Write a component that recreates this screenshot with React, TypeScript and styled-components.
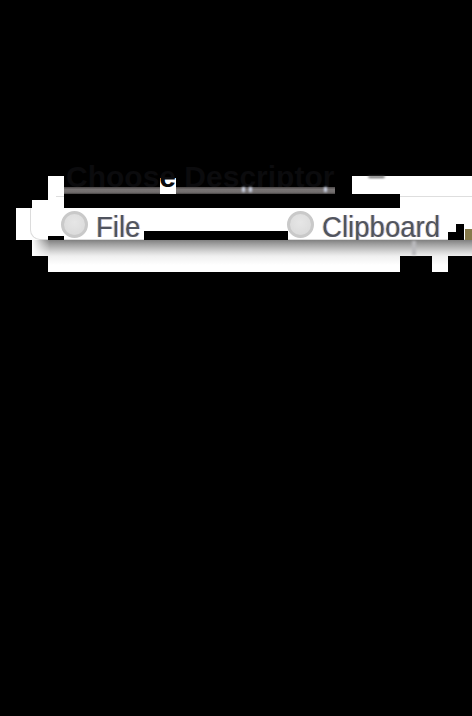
import React from "react";
import styled, { createGlobalStyle } from "styled-components";

const Global = createGlobalStyle`
  html, body { margin: 0; padding: 0; background: #000; }
  #root { width: 472px; height: 716px; overflow: hidden; }
`;

const Stage = styled.div`
  position: relative;
  width: 472px;
  height: 716px;
  background: #000;
  padding: 176px 0 0 16px;
  box-sizing: border-box;
  overflow: hidden;
`;

const Strip = styled.div<{ $h: number }>`
  display: flex;
  height: ${(p) => p.$h}px;
`;

const Void = styled.div<{ $w: number }>`
  position: relative;
  flex: none;
  width: ${(p) => p.$w}px;
  display: flex;
  align-items: flex-end;
`;

const Clear = styled.div<{ $w?: number }>`
  background: #fff;
  flex: ${(p) => (p.$w ? `none` : `1`)};
  width: ${(p) => (p.$w ? `${p.$w}px` : `auto`)};
  display: flex;
  justify-content: flex-start;
`;

const Rule = styled.div<{ $inset?: number }>`
  width: 100%;
  height: 1px;
  margin: 2px 0 0 ${(p) => p.$inset ?? 0}px;
  background: #dedede;
`;

const HelpDot = styled.div`
  width: 17px;
  height: 2px;
  margin-left: 16px;
  background: #555;
  border-radius: 0 0 10px 10px;
  filter: blur(1px);
`;

const Band = styled.div<{ $w: number }>`
  position: relative;
  z-index: 1;
  flex: none;
  width: ${(p) => p.$w}px;
  height: 7px;
  background: linear-gradient(#4a4646, #787474 35%, #726e6e 75%, #454343);
`;

const Spark = styled.i<{ $x: number; $w: number }>`
  position: absolute;
  left: ${(p) => p.$x}px;
  top: 0;
  width: ${(p) => p.$w}px;
  height: 5px;
  background: #cfd6e8;
  filter: blur(1px);
`;

const NotchedPatch = styled.div`
  flex: none;
  width: 16px;
  background: linear-gradient(#000 2px, #fff 2px);
`;

const CardRow = styled.div`
  position: relative;
  height: 32px;
  background: #fff;
  padding-left: 14px;
  overflow: hidden;
`;

const Card = styled.div`
  height: 40px;
  margin-top: -8px;
  box-sizing: border-box;
  border: 1px solid #dcdcdc;
  border-right: none;
  border-radius: 10px 0 0 10px;
  padding: 10px 0 0 30px;
  display: flex;
  filter: blur(0.5px);
`;

const Option = styled.label<{ $width: number }>`
  width: ${(p) => p.$width}px;
  display: flex;
  align-items: flex-start;
  gap: 8px;
  flex: none;
`;

const Radio = styled.input.attrs({ type: "radio", name: "source" })`
  appearance: none;
  width: 27px;
  height: 27px;
  margin: 0;
  flex: none;
  border-radius: 50%;
  border: 3px solid #c9c9c9;
  background: radial-gradient(circle at 50% 40%, #e6e6e6, #d8d8d8);
  box-sizing: border-box;
`;

const OptionText = styled.span`
  display: inline-block;
  font: 27.6px/30px "Liberation Sans", Arial, sans-serif;
  color: #50545f;
  transform: scaleY(1.1);
  transform-origin: 50% 0;
  text-shadow: -1px 0 rgba(240, 150, 40, 0.4), 1px 0 rgba(50, 110, 240, 0.4);
`;

const Tear = styled.div<{ $x: number; $y: number; $w: number; $h: number }>`
  position: absolute;
  left: ${(p) => p.$x}px;
  top: ${(p) => p.$y}px;
  width: ${(p) => p.$w}px;
  height: ${(p) => p.$h}px;
  background: #000;
`;

const OliveTear = styled(Tear)`
  background: #85794a;
`;

const Shadow = styled.div`
  position: relative;
  flex: 1;
  background:
    linear-gradient(to right, #fff, rgba(255, 255, 255, 0) 18px),
    linear-gradient(#808080, #a6a6a6 5px, #d8d8d8 12px, #efefef 16px);
`;

const Tick = styled.i`
  position: absolute;
  left: 380px;
  top: 1px;
  width: 4px;
  height: 14px;
  background: #b9b9bd;
  filter: blur(1px);
`;

const Fade = styled.div<{ $w: number }>`
  flex: none;
  width: ${(p) => p.$w}px;
  background: linear-gradient(#efefef, #fff 9px);
`;

const Title = styled.h1`
  position: absolute;
  left: 66px;
  top: 160px;
  margin: 0;
  white-space: nowrap;
  font: bold 30px/34px "Liberation Sans", Arial, sans-serif;
  color: #0b0b0d;
`;

export default function App() {
  return (
    <Stage>
      <Global />
      <Strip $h={18}>
        <Void $w={32} />
        <Clear $w={16} />
        <Void $w={96}>
          <Band $w={96} />
        </Void>
        <NotchedPatch />
        <Void $w={176}>
          <Band $w={159}>
            <Spark $x={66} $w={3} />
            <Spark $x={73} $w={3} />
            <Spark $x={148} $w={3} />
          </Band>
        </Void>
        <Clear>
          <HelpDot />
        </Clear>
      </Strip>
      <Strip $h={6}>
        <Void $w={32} />
        <Clear $w={16}>
          <Rule $inset={8} />
        </Clear>
        <Void $w={336} />
        <Clear>
          <Rule />
        </Clear>
      </Strip>
      <Strip $h={8}>
        <Void $w={16} />
        <Clear $w={32} />
        <Void $w={336} />
        <Clear />
      </Strip>
      <CardRow>
        <Card>
          <Option $width={226}>
            <Radio />
            <OptionText>File</OptionText>
          </Option>
          <Option $width={170}>
            <Radio />
            <OptionText>Clipboard</OptionText>
          </Option>
        </Card>
        <Tear $x={32} $y={28} $w={16} $h={4} />
        <Tear $x={128} $y={23} $w={144} $h={9} />
        <Tear $x={432} $y={24} $w={16} $h={8} />
        <Tear $x={440} $y={16} $w={8} $h={8} />
        <OliveTear $x={449} $y={21} $w={7} $h={11} />
      </CardRow>
      <Strip $h={16}>
        <Void $w={16} />
        <Shadow>
          <Tick />
        </Shadow>
      </Strip>
      <Strip $h={16}>
        <Void $w={32} />
        <Fade $w={352} />
        <Void $w={32} />
        <Fade $w={16} />
      </Strip>
      <Title>Choose Descriptor</Title>
    </Stage>
  );
}
